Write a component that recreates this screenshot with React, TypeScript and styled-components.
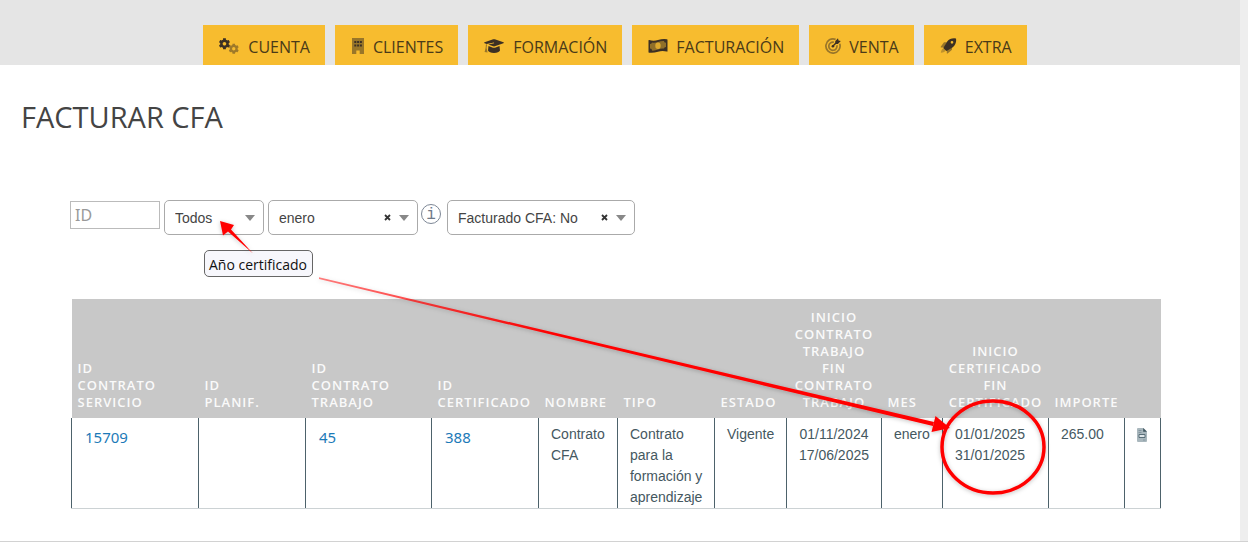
import React from "react";
import styled, { createGlobalStyle } from "styled-components";

const ui = `"Open Sans", "Noto Sans", sans-serif`;
const body = `"Liberation Sans", Arial, sans-serif`;

const GlobalStyle = createGlobalStyle`
  *, *::before, *::after { box-sizing: border-box; }
  body { margin: 0; background: #fff; font-family: ${ui}; color: #444; }
`;

const Page = styled.div`
  position: relative;
  display: flex;
  min-height: 100vh;
  border-bottom: 1px solid #d2d2d2;
`;

const Content = styled.div`
  flex: 1;
  min-width: 0;
`;

const ScrollTrack = styled.div`
  width: 8px;
  background: #eee;
`;

const Header = styled.header`
  background: #e5e5e5;
  padding: 25px 20px 0 10px;
`;

const Nav = styled.nav`
  display: flex;
  justify-content: center;
  gap: 10px;
`;

const NavLink = styled.a<{ $gap?: number }>`
  display: flex;
  align-items: center;
  gap: ${(p) => p.$gap ?? 9}px;
  height: 40px;
  padding: 4px 15px 0 16px;
  background: #f7bc2f;
  color: #4a3a18;
  font-size: 16px;
  line-height: 20px;
  text-decoration: none;

  svg {
    display: block;
    flex: none;
    margin-bottom: 2px;
    color: #3c3024;
  }
`;

const Title = styled.h1`
  margin: 0;
  padding: 33px 21px 0;
  font-size: 29px;
  line-height: 38px;
  font-weight: 400;
  color: #444;
`;

const Main = styled.main`
  padding: 64px 79px 32px 70px;
`;

const Filters = styled.form`
  position: relative;
  display: flex;
  align-items: flex-start;
  gap: 4px;
  height: 35px;
`;

const IdInput = styled.input`
  width: 90px;
  height: 28px;
  margin-top: 1px;
  padding: 0 4px;
  border: 1px solid #bbb;
  border-radius: 0;
  background: #fff;
  font-family: "Noto Sans", sans-serif;
  font-size: 16px;
  color: #444;

  &::placeholder { color: #999; opacity: 1; }
`;

const SelectBox = styled.div<{ $width: number }>`
  display: flex;
  align-items: center;
  gap: 8px;
  width: ${(p) => p.$width}px;
  height: 35px;
  padding: 0 8px 0 10px;
  border: 1px solid #aaa;
  border-radius: 5px;
  background: #fff;

  svg { display: block; flex: none; }
`;

const Select = styled.select`
  flex: 1;
  min-width: 0;
  height: 33px;
  padding: 0;
  border: 0;
  background: transparent;
  appearance: none;
  font-family: ${body};
  font-size: 14px;
  color: #444;
`;

const Clear = styled.button`
  display: block;
  padding: 0;
  border: 0;
  background: none;
  color: #333;
`;

const Info = styled.button`
  display: flex;
  align-items: center;
  justify-content: center;
  width: 20px;
  height: 20px;
  margin: 4px 2px 0 -1px;
  padding: 2px 0 0;
  border: 1px solid #7d8796;
  border-radius: 50%;
  background: #fff;
  color: #6f7a8a;
  font-family: "Liberation Mono", monospace;
  font-size: 16px;
  line-height: 18px;
`;

const Tooltip = styled.div`
  position: absolute;
  left: 134px;
  top: 50px;
  height: 27px;
  padding: 0 5px 0 4px;
  border: 1px solid #666;
  border-radius: 5px;
  background: #f7f7fc;
  color: #111;
  font-size: 14px;
  line-height: 27px;
  white-space: nowrap;
`;

const Table = styled.table`
  width: calc(100% - 1px);
  margin: 64px 0 0 1px;
  border-collapse: collapse;
  table-layout: fixed;
`;

const Th = styled.th<{ $center?: boolean }>`
  height: 119px;
  padding: 8px 0 7px 6px;
  ${(p) => p.$center && "padding-left: 0;"}
  background: #c8c8c8;
  color: #fafafa;
  font-family: ${ui};
  font-size: 13px;
  font-weight: 600;
  line-height: 17px;
  letter-spacing: 1px;
  text-align: ${(p) => (p.$center ? "center" : "left")};
  vertical-align: bottom;
  white-space: pre-line;
`;

const Td = styled.td<{ $center?: boolean }>`
  height: 90px;
  padding: ${(p) => (p.$center ? "6px 0 0" : "6px 4px 0 12px")};
  border: 1px solid #4d626b;
  border-width: 0 1px;
  border-bottom: 1px solid #ccd2d4;
  color: #45585f;
  font-family: ${body};
  font-size: 14px;
  line-height: 21px;
  text-align: ${(p) => (p.$center ? "center" : "left")};
  vertical-align: top;
  white-space: pre-line;

  svg { display: block; margin: 4px auto 0; }
`;

const IdLink = styled.a`
  display: block;
  padding: 3px 0 0 1px;
  color: #1c7ab8;
  font-family: "Noto Sans", sans-serif;
  font-size: 15px;
  text-decoration: none;
`;

const Annotations = styled.svg`
  position: absolute;
  left: 0;
  top: 0;
  pointer-events: none;
`;

const gearPath =
  "M487.4 315.7l-42.6-24.6c4.3-23.2 4.3-47 0-70.2l42.6-24.6c4.9-2.8 7.1-8.6 5.500-14-11.1-35.600-30-67.800-54.700-94.600-3.800-4.100-10-5.100-14.800-2.300L380.800 110c-17.900-15.400-38.500-27.300-60.800-35.100V25.800c0-5.600-3.900-10.500-9.400-11.700-36.700-8.200-74.300-7.800-109.200 0-5.500 1.200-9.400 6.100-9.400 11.700V75c-22.200 7.900-42.800 19.800-60.800 35.100L88.700 85.500c-4.900-2.800-11-1.900-14.800 2.300-24.700 26.700-43.600 58.900-54.700 94.600-1.700 5.400.6 11.200 5.500 14L67.300 221c-4.300 23.200-4.300 47 0 70.200l-42.600 24.600c-4.900 2.800-7.100 8.600-5.500 14 11.100 35.600 30 67.800 54.700 94.600 3.800 4.100 10 5.100 14.800 2.300l42.600-24.600c17.900 15.400 38.500 27.300 60.800 35.100v49.200c0 5.600 3.900 10.500 9.400 11.700 36.700 8.200 74.300 7.800 109.200 0 5.500-1.200 9.400-6.100 9.400-11.700v-49.200c22.200-7.900 42.800-19.800 60.800-35.100l42.600 24.600c4.900 2.800 11 1.900 14.800-2.300 24.700-26.700 43.600-58.900 54.700-94.600 1.500-5.500-.7-11.300-5.600-14.100zM256 336c-44.100 0-80-35.900-80-80s35.900-80 80-80 80 35.900 80 80-35.900 80-80 80z";

const GearsIcon = () => (
  <svg width="20" height="16" viewBox="0 0 20 16" fill="currentColor">
    <g transform="translate(-.3 0) scale(.0225)"><path d={gearPath} /></g>
    <g transform="translate(9.500 5.500) scale(.0205)" opacity=".48"><path d={gearPath} /></g>
  </svg>
);

const BuildingIcon = () => (
  <svg width="14" height="16" viewBox="0 0 14 16" fill="currentColor">
    <path opacity=".5" d="M1 0h12v16H8.700v-3.600H5.300V16H1z" />
    <path d="M3.300 3h2v2h-2zM6.100 3h2v2h-2zM8.900 3h2v2h-2zM3.300 6.500h2v2h-2zM6.100 6.500h2v2h-2zM8.900 6.500h2v2h-2z" />
  </svg>
);

const CapIcon = () => (
  <svg width="20" height="16" viewBox="0 0 20 16" fill="currentColor">
    <path d="M.6 4.300 9.200 1.300q.8-.3 1.600 0l8.600 3q1 .5 0 1l-8.600 3q-.8.300-1.600 0L4.300 6.600l5.900-1.300-.2-.7-7.300 1.300-2.100-.6q-1-.5 0-1z" />
    <path d="M4.500 8.100 9 9.700q1 .3 2 0l4.500-1.600.5 4.500q-1.200 2.300-6 2.400-4.800-.1-6-2.400z" />
    <path opacity=".5" d="M2 6.200 3 6.500 2.600 10l1 4.500L.6 14l1-4z" />
  </svg>
);

const MoneyIcon = () => (
  <svg width="20" height="16" viewBox="0 0 20 16" fill="currentColor">
    <path opacity=".55" d="M2.400 3.600Q6 4.800 10 3.100t7.600-.8v9.900Q14 11.200 10 12.900t-7.600.8z" />
    <path fillRule="evenodd" d="M.5 2.500q0-.7.700-.5Q5.500 3.500 10 2T19 1.200q.5.200.5.700v11.200q0 .7-.7.500Q14.500 12.200 10 13.700T1 14.700q-.5-.2-.5-.7zM4 4.600Q3.800 6 2.300 6.100v4.500Q4 10.800 4 12.600q3 .2 6-1t6-1q.2-1.400 1.700-1.500V4.800Q16 4.600 16 3q-3-.2-6 1t-6 .6z" />
    <ellipse cx="10" cy="7.800" rx="2.700" ry="3.300" fill="#f7bc2f" opacity=".75" />
  </svg>
);

const TargetIcon = () => (
  <svg width="16" height="16" viewBox="0 0 16 16" fill="none" stroke="currentColor">
    <g opacity=".5" strokeWidth="1.700">
      <path d="M10.600 1.400A7.100 7.100 0 1 0 14.700 5.700" />
      <path d="M8.900 4.200A4.100 4.100 0 1 0 11.900 7.300" />
    </g>
    <circle cx="7.900" cy="8.200" r="1.300" fill="currentColor" stroke="none" />
    <path d="M8 8.100 12.500 3.600" strokeWidth="1.400" />
    <path fill="currentColor" stroke="none" d="M10.200 3.200 13 .3l.5 2.200 2.300.5L12.900 5.900h-2.500z" />
  </svg>
);

const RocketIcon = () => (
  <svg width="17" height="16" viewBox="0 0 17 16" fill="currentColor">
    <path opacity=".5" d="M7 4.200H4L.7 8.700q-.3.800.5.800h3zM12 8.700v3.100L7.600 15.500q-.8.200-.8-.6V12z" />
    <path opacity=".3" d="M3.800 10.200Q1.300 10.700.8 14.800 5 14.600 5.700 12z" />
    <path fillRule="evenodd" d="M16 .4Q10.200-.4 7.200 3.500L3.600 9.400Q3.300 10.100 3.800 10.600l2 2q.5.500 1.200.2l5.800-3.600Q16.900 6 16 .4zM12 3a1.300 1.300 0 1 1 0 2.700A1.300 1.300 0 0 1 12 3z" />
  </svg>
);

const Caret = () => (
  <svg width="10" height="6" viewBox="0 0 10 6"><path d="M0 0h10L5 6z" fill="#888" /></svg>
);

const Cross = () => (
  <svg width="7" height="7" viewBox="0 0 7 7">
    <path d="M1 1l5 5M6 1L1 6" stroke="currentColor" strokeWidth="1.800" />
  </svg>
);

const FileIcon = () => (
  <svg width="10" height="14" viewBox="0 0 10 14">
    <path d="M0 1q0-1 1-1h5.500L10 3.500V13q0 1-1 1H1q-1 0-1-1z" fill="#a9b7bd" />
    <path d="M6.200 0 10 3.800H6.200z" fill="#3f555f" />
    <path d="M1.500 2.500h3M1.500 4.500h3M6 12h2.500" stroke="#8496a0" />
    <path d="M2 6.500h6v3H2z" fill="#dfe6e9" stroke="#5a6f79" />
  </svg>
);

const menu = [
  { label: "CUENTA", icon: <GearsIcon /> },
  { label: "CLIENTES", icon: <BuildingIcon />, gap: 8 },
  { label: "FORMACIÓN", icon: <CapIcon /> },
  { label: "FACTURACIÓN", icon: <MoneyIcon />, gap: 8 },
  { label: "VENTA", icon: <TargetIcon />, gap: 8 },
  { label: "EXTRA", icon: <RocketIcon />, gap: 8 },
];

const columns = [
  { label: "ID\nCONTRATO\nSERVICIO", width: 127 },
  { label: "ID\nPLANIF.", width: 107 },
  { label: "ID\nCONTRATO\nTRABAJO", width: 126 },
  { label: "ID\nCERTIFICADO", width: 107 },
  { label: "NOMBRE", width: 79 },
  { label: "TIPO", width: 97 },
  { label: "ESTADO", width: 72 },
  { label: "INICIO\nCONTRATO\nTRABAJO\nFIN\nCONTRATO\nTRABAJO", width: 95, center: true },
  { label: "MES", width: 61 },
  { label: "INICIO\nCERTIFICADO\nFIN\nCERTIFICADO", width: 106, center: true },
  { label: "IMPORTE", width: 76 },
  { label: "", width: 36 },
];

export default function App() {
  return (
    <Page>
      <GlobalStyle />
      <Content>
        <Header>
          <Nav>
            {menu.map((m) => (
              <NavLink key={m.label} href="#" $gap={m.gap}>
                {m.icon}
                {m.label}
              </NavLink>
            ))}
          </Nav>
        </Header>
        <Title>FACTURAR CFA</Title>
        <Main>
          <Filters>
            <IdInput type="text" placeholder="ID" aria-label="ID" />
            <SelectBox $width={100}>
              <Select aria-label="Año certificado"><option>Todos</option></Select>
              <Caret />
            </SelectBox>
            <SelectBox $width={150}>
              <Select aria-label="Mes"><option>enero</option></Select>
              <Clear type="button" aria-label="Quitar mes"><Cross /></Clear>
              <Caret />
            </SelectBox>
            <Info type="button">i</Info>
            <SelectBox $width={188}>
              <Select aria-label="Facturado CFA"><option>Facturado CFA: No</option></Select>
              <Clear type="button" aria-label="Quitar facturado"><Cross /></Clear>
              <Caret />
            </SelectBox>
            <Tooltip role="tooltip">Año certificado</Tooltip>
          </Filters>
          <Table>
            <colgroup>
              {columns.map((c, i) => <col key={i} style={{ width: `${(c.width / 1089) * 100}%` }} />)}
            </colgroup>
            <thead>
              <tr>
                {columns.map((c, i) => <Th key={i} $center={c.center}>{c.label}</Th>)}
              </tr>
            </thead>
            <tbody>
              <tr>
                <Td><IdLink href="#">15709</IdLink></Td>
                <Td />
                <Td><IdLink href="#">45</IdLink></Td>
                <Td><IdLink href="#">388</IdLink></Td>
                <Td>Contrato CFA</Td>
                <Td>Contrato para la formación y aprendizaje</Td>
                <Td>Vigente</Td>
                <Td $center>{"01/11/2024\n17/06/2025"}</Td>
                <Td>enero</Td>
                <Td>{"01/01/2025\n31/01/2025"}</Td>
                <Td>265.00</Td>
                <Td $center><FileIcon /></Td>
              </tr>
            </tbody>
          </Table>
        </Main>
      </Content>
      <ScrollTrack />
      <Annotations width="1248" height="541" viewBox="0 0 1248 541" aria-hidden="true">
        <defs>
          <linearGradient id="fade" gradientUnits="userSpaceOnUse" x1="319" y1="278" x2="560" y2="334">
            <stop offset="0" stopColor="#f00" stopOpacity=".5" />
            <stop offset="1" stopColor="#f00" />
          </linearGradient>
          <filter id="shadow" x="-10%" y="-10%" width="120%" height="120%">
            <feDropShadow dx="0" dy="1" stdDeviation="2" floodColor="#000" floodOpacity=".25" />
          </filter>
        </defs>
        <g filter="url(#shadow)">
          <path d="M220 221 234 225 231 229.500 253 253.500 228 231.500 223 235.500z" fill="#f00" />
          <path d="M319 277.300 934 422 933 426 319 279z" fill="url(#fade)" />
          <path d="M935.500 416 950 428 931.500 432z" fill="#f00" />
          <ellipse cx="993" cy="447" rx="51" ry="46" fill="none" stroke="#f00" strokeWidth="3.500" />
        </g>
      </Annotations>
    </Page>
  );
}
